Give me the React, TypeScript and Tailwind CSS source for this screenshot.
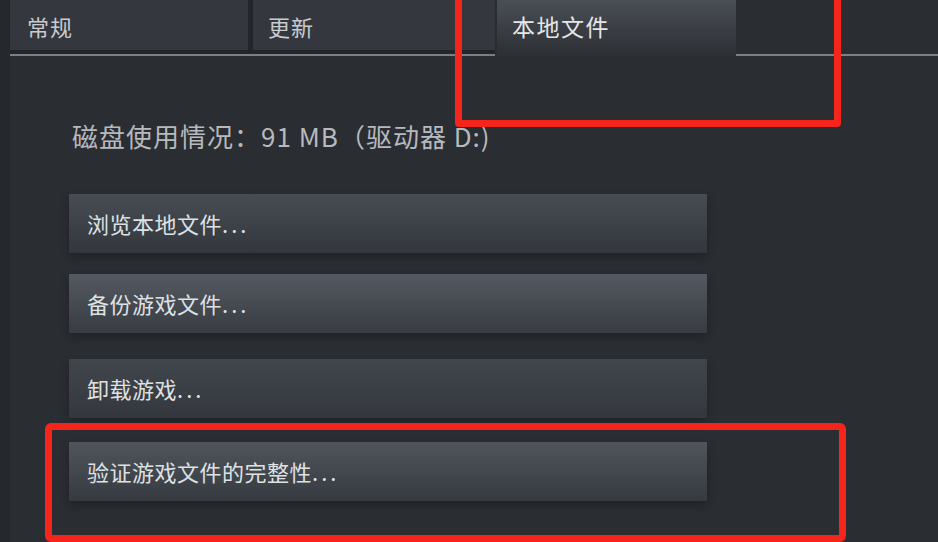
const buttons = [
  { label: '浏览本地文件', cls: 'mt-[42px] from-[#484d54] to-[#33373d]' },
  { label: '备份游戏文件', cls: 'mt-[21px] from-[#545a62] to-[#383c42]' },
  { label: '卸载游戏', cls: 'mt-[26px] from-[#41464d] to-[#34383e]' },
  { label: '验证游戏文件的完整性', cls: 'mt-[24px] from-[#50555d] to-[#363a40]' },
];

export default function App() {
  return (
    <div
      className="relative w-[938px] h-[542px] overflow-hidden bg-[#2a2d32] flex"
      style={{ fontFamily: '"Noto Sans CJK SC", "Noto Sans", sans-serif' }}
    >
      <div className="w-[10px] h-full bg-[#25282d]" />

      <div className="flex-1 flex flex-col">
        {/* tabs */}
        <div className="flex items-end h-[56px]">
          <div className="flex gap-[5px] w-[485px] pb-[4px] border-b-2 border-[#7c8085] bg-[#222529]">
            <div className="w-[238px] h-[50px] bg-[#34383e] flex items-center pl-[17px] pt-[3px] text-[22px] tracking-[1px] text-[#c9cbce]">
              常规
            </div>
            <div className="w-[242px] h-[50px] bg-[#34383e] flex items-center pl-[15px] pt-[3px] text-[22px] tracking-[1px] text-[#c9cbce]">
              更新
            </div>
          </div>
          <div className="w-[2px] h-[56px] bg-[#2a2d32]" />
          <div className="w-[239px] h-[56px] bg-gradient-to-b from-[#4a4f56] to-[#2c2f34] flex items-start pl-[15px] pt-[9px] text-[23px] tracking-[1.5px] text-[#e4e6e8]">
            本地文件
          </div>
          <div className="flex-1 h-[56px] border-b-2 border-[#7c8085]" />
        </div>

        {/* content */}
        <div className="flex flex-col pl-[59px]">
          <div className="mt-[64px] pl-[3px] text-[26px] leading-[32px] text-[#b6b9bd] tracking-[1px]">
            磁盘使用情况：91 MB（驱动器 D:)
          </div>
          {buttons.map((b) => (
            <div
              key={b.label}
              className={`w-[638px] h-[59px] bg-gradient-to-b ${b.cls} flex items-center pl-[18px] text-[22px] tracking-[0.5px] text-[#dfe1e3] shadow-[0_4px_8px_rgba(0,0,0,0.25)]`}
            >
              {b.label}
              <span className="tracking-[3px]">...</span>
            </div>
          ))}
        </div>
      </div>

      {/* annotation boxes */}
      <div className="absolute left-[455px] top-[-10px] w-[386px] h-[137px] border-[7px] border-[#f5251b] rounded-[4px]" />
      <div className="absolute left-[45px] top-[423px] w-[801px] h-[119px] border-[7px] border-[#f5251b] rounded-[6px]" />
    </div>
  );
}
